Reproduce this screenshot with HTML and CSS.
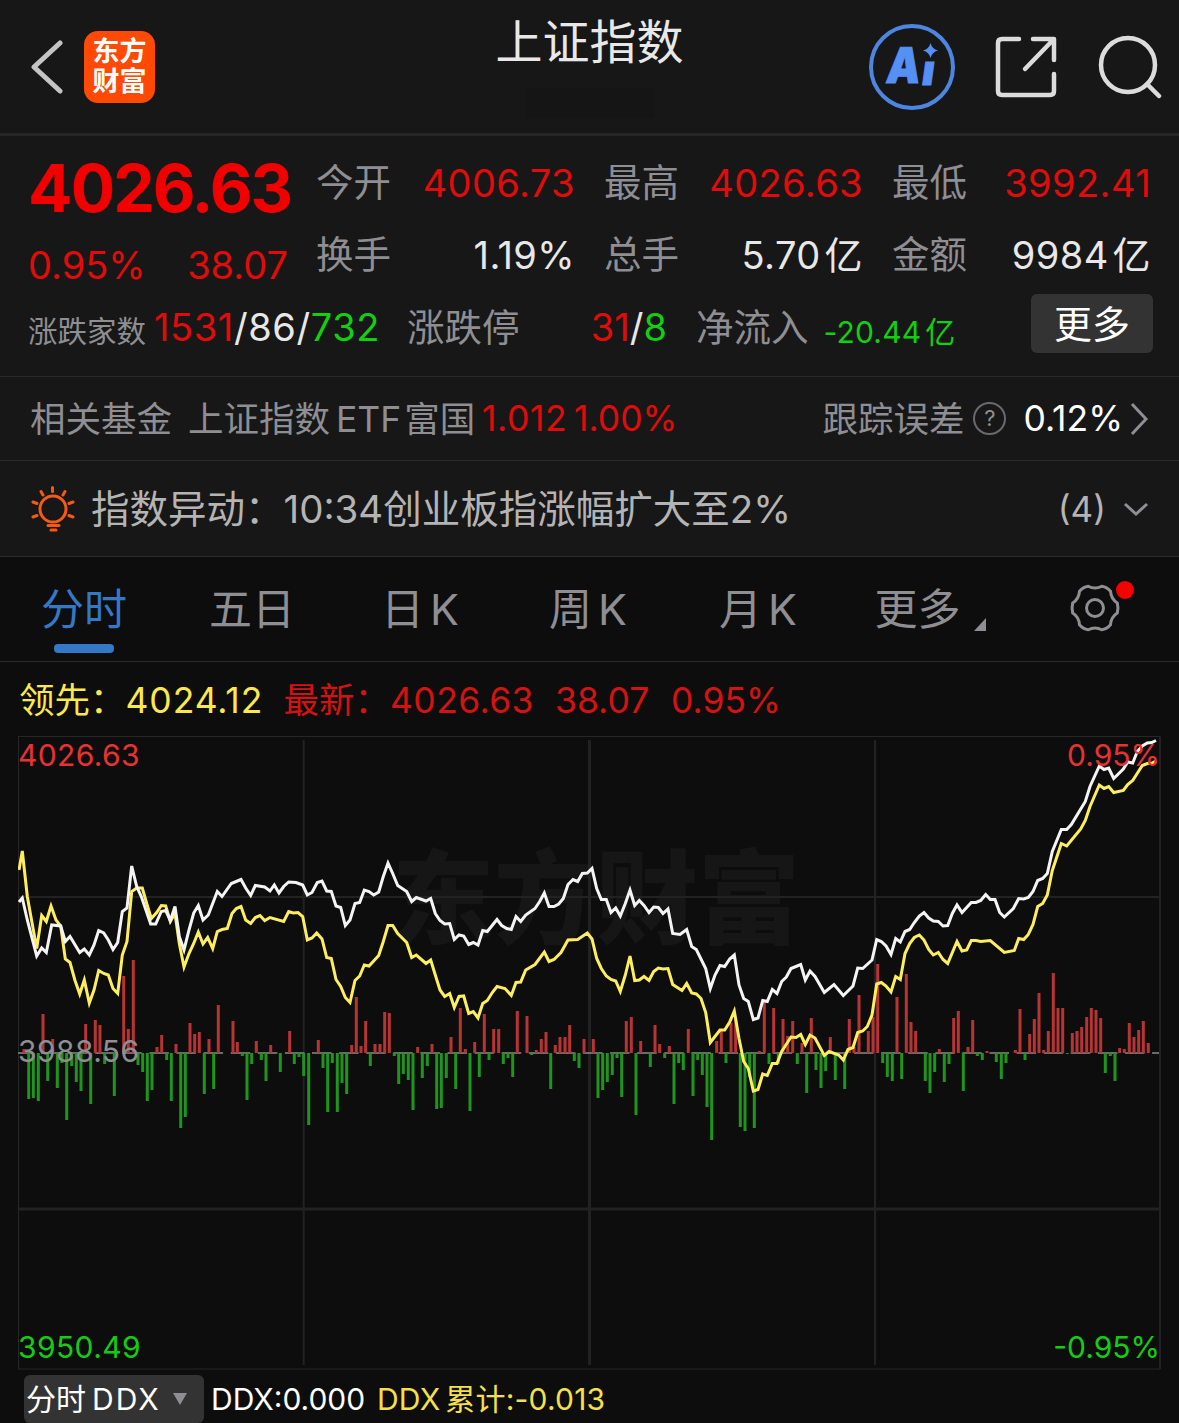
FILE: index.html
```
<!DOCTYPE html>
<html lang="zh-CN">
<head>
  <meta charset="UTF-8">
  <meta name="viewport" content="width=device-width, initial-scale=1.0">
  <title>上证指数</title>
  <link rel="stylesheet" href="styles.css">
</head>
<body>
  <header class="topbar">
    <div class="topbar-left">
      <svg class="back" width="34" height="56" viewBox="0 0 34 56"><path d="M31 4 L5 28 L31 52"/></svg>
      <div class="logo"><span>东方</span><span>财富</span></div>
    </div>
    <div class="title">
      <h1>上证指数</h1>
      <div class="subtitle"></div>
    </div>
    <div class="topbar-right">
      <svg class="ai" width="88" height="88" viewBox="0 0 88 88">
        <circle cx="44" cy="44" r="41"/>
        <text class="ai-a" x="0" y="0" transform="translate(17 60) skewX(-7) scale(0.87 1)">A</text>
        <text class="ai-i" x="0" y="0" transform="translate(52.5 62) skewX(-8)">ı</text>
        <path d="M62.500 20 Q64 26 70 27.500 Q64 29 62.500 35 Q61 29 55 27.500 Q61 26 62.500 20Z"/>
      </svg>
      <svg class="line-icon share" width="62" height="62" viewBox="0 0 62 62">
        <path d="M24 3 H7 Q3 3 3 7 V55 Q3 59 7 59 H55 Q59 59 59 55 V38"/>
        <path d="M38 3 H59 V24 M58 4 L30 33"/>
      </svg>
      <svg class="line-icon" width="64" height="64" viewBox="0 0 64 64">
        <circle cx="30" cy="30" r="27"/><path d="M49 49 L61 61"/>
      </svg>
    </div>
  </header>

  <section class="quote">
    <div class="quote-main">
      <div class="price">
        <div class="price-now">4026.63</div>
        <div class="price-change"><span>0.95%</span><span>38.07</span></div>
      </div>
      <div class="stats">
        <div class="stat"><label>今开</label><span class="red">4006.73</span></div>
        <div class="stat"><label>最高</label><span class="red">4026.63</span></div>
        <div class="stat"><label>最低</label><span class="red">3992.41</span></div>
        <div class="stat"><label>换手</label><span>1.19%</span></div>
        <div class="stat"><label>总手</label><span>5.70<i>亿</i></span></div>
        <div class="stat"><label>金额</label><span>9984<i>亿</i></span></div>
      </div>
    </div>
    <div class="quote-more">
      <label class="small">涨跌家数</label>
      <span class="count"><b class="red">1531</b>/86/<b class="green">732</b></span>
      <label class="limit-label">涨跌停</label>
      <span class="limit"><b class="red">31</b>/<b class="green">8</b></span>
      <label class="flow-label">净流入</label>
      <span class="flow green">-20.44<i>亿</i></span>
      <button class="more-btn">更多</button>
    </div>
  </section>

  <section class="fund">
    <span class="fund-label">相关基金</span>
    <span class="fund-name">上证指数<i>ETF</i>富国</span>
    <span class="fund-price red">1.012</span>
    <span class="fund-rate red">1.00%</span>
    <span class="track">跟踪误差</span>
    <span class="help">?</span>
    <span class="track-value">0.12%</span>
    <svg class="arrow-right" width="20" height="36" viewBox="0 0 20 36"><path d="M3 3 L17 18 L3 33"/></svg>
  </section>

  <section class="alert">
    <svg class="bulb" width="46" height="46" viewBox="0 0 46 46">
      <circle cx="23" cy="23" r="13"/>
      <path d="M22.500 1.500 V5.500 M11 5.500 L13 9 M35 5.500 L33 9 M3 16 L7 17.500 M43 16 L39 17.500 M3 31 L7 29.500 M43 31 L39 29.500 M18 39.500 H29 M21 44 H26"/>
    </svg>
    <span class="alert-text">指数异动：<i>10:34创业板指涨幅扩大至2%</i></span>
    <span class="alert-count">(4)</span>
    <svg class="arrow-down" width="26" height="16" viewBox="0 0 26 16"><path d="M2 3 L13 13 L24 3"/></svg>
  </section>

  <nav class="tabs">
    <a class="tab active">分时</a>
    <a class="tab">五日</a>
    <a class="tab">日<i>K</i></a>
    <a class="tab">周<i>K</i></a>
    <a class="tab">月<i>K</i></a>
    <a class="tab tab-more">更多<span class="corner"></span></a>
    <a class="settings">
      <svg width="52" height="52" viewBox="-26 -26 52 52">
        <path d="M22.300 -5 Q23.600 0 22.300 5 Q16 9 15.500 16.800 Q12 21 6.800 21.800 Q0 18 -6.800 21.800 Q-12 21 -15.500 16.800 Q-16 9 -22.300 5 Q-23.600 0 -22.300 -5 Q-16 -9 -15.500 -16.800 Q-12 -21 -6.800 -21.800 Q0 -18 6.800 -21.800 Q12 -21 15.500 -16.800 Q16 -9 22.300 -5Z"/>
        <circle r="8.500"/>
      </svg>
      <span class="dot"></span>
    </a>
  </nav>

  <section class="legend">
    <span class="lead">领先：</span><span class="lead lead-value">4024.12</span>
    <span class="last">最新：</span><span class="last last-value">4026.63</span><span class="last last-diff">38.07</span><span class="last">0.95%</span>
  </section>

  <section class="chart">
    <svg width="1143" height="634" viewBox="0 0 1143 634">
      <text class="watermark" x="374" y="200">东方财富</text>

      <!-- grid -->
      <rect class="frame" x="0.500" y="0.500" width="1141.500" height="632.500"/>
      <path class="grid" d="M285.700 4 V629 M857 4 V629 M1 161 H1142 M1142 1 V633"/>
      <path class="grid bold" d="M571.500 4 V629 M1 473 H1142"/>
      <path class="zero" d="M-4.100 317 H1141"/>

      <!-- net inflow / outflow bars -->
      <path class="bars up" d="M6 317v-4M25 317v-39M34.700 317v-14M67.700 317v-29M77.300 317v-33M82 317v-28M105.700 317v-77M110.300 317v-24M115.300 317v-93M139 317v-6M143.700 317v-18M158 317v-9M172 317v-30M176.700 317v-19M181.300 317v-21M191 317v-14M200.300 317v-48M215 317v-32M219.300 317v-11M238.300 317v-12M252.700 317v-8M271.700 317v-22M300.300 317v-13M333.700 317v-8M338.300 317v-56M343 317v-7M347.700 317v-32M357 317v-9M362 317v-9M366.700 317v-41M371.300 317v-40M399.700 317v-6M414 317v-9M433 317v-16M442.300 317v-45M447.300 317v-4M456.700 317v-11M466.300 317v-39M475.700 317v-24M480.700 317v-24M499.300 317v-42M509 317v-37M518.300 317v-3M523.300 317v-14M528 317v-21M537.300 317v-8M542 317v-16M547 317v-16M551.700 317v-28M566 317v-14M575.300 317v-14M608.300 317v-32M613.300 317v-36M622.700 317v-12M637 317v-28M641.700 317v-9M651.300 317v-7M670.300 317v-24M698.700 317v-12M703.300 317v-23M713 317v-30M717.700 317v-33M741.300 317v-2M746.300 317v-51M755.700 317v-45M765 317v-34M769.700 317v-17M774.700 317v-32M784 317v-10M793.300 317v-35M812.300 317v-16M831.300 317v-34M836 317v-6M841 317v-58M850.300 317v-22M855 317v-36M859.700 317v-89M879 317v-56M888.300 317v-79M893 317v-31M897.700 317v-22M921.300 317v-4M935.700 317v-35M940.300 317v-42M950 317v-6M954.700 317v-33M969 317v-2M997.300 317v-3M1002 317v-44M1011.700 317v-19M1016.300 317v-34M1021 317v-60M1025.700 317v-3M1030.300 317v-22M1035.300 317v-80M1040 317v-45M1044.700 317v-45M1054.300 317v-20M1059 317v-22M1063.700 317v-26M1068.700 317v-36M1073.300 317v-45M1078 317v-43M1082.700 317v-35M1101.700 317v-5M1106.300 317v-4M1111.300 317v-30M1116 317v-16M1120.700 317v-23M1125.300 317v-32M1130.300 317v-10"/>
      <path class="bars down" d="M10.700 317v46M15.300 317v45M20.300 317v48M29.700 317v28M39.300 317v35M44 317v10M48.700 317v67M53.700 317v13M58.300 317v29M63 317v38M72.700 317v51M86.700 317v11M96.300 317v43M120 317v12M124.700 317v19M129.300 317v48M134 317v37M148.700 317v7M153.300 317v48M162.700 317v75M167.300 317v64M186.300 317v41M195.700 317v36M224.300 317v3M229 317v47M233.700 317v11M243.300 317v7M248 317v28M262.300 317v19M276.300 317v11M281 317v4M285.700 317v23M290.700 317v72M305 317v15M309.700 317v59M314.300 317v10M319.300 317v59M324 317v30M328.700 317v41M352.300 317v13M376.300 317v3M380.700 317v31M385.300 317v21M390.300 317v27M395 317v57M404.300 317v25M409.300 317v13M418.700 317v56M423.300 317v55M428.300 317v25M437.700 317v36M452 317v58M461.300 317v24M471 317v7M485.300 317v11M490 317v5M494.700 317v24M513.700 317v2M532.700 317v36M556.300 317v8M561 317v15M580 317v45M584.700 317v37M589.300 317v29M594.300 317v22M599 317v5M603.700 317v44M618 317v62M632.300 317v14M646.700 317v5M656 317v51M660.700 317v10M665.300 317v17M675 317v43M679.700 317v7M684.300 317v22M689 317v54M693.700 317v87M708 317v10M722.300 317v74M727 317v78M731.700 317v24M736.300 317v75M751 317v11M760.300 317v11M779.300 317v11M788.700 317v40M798 317v17M803 317v35M807.700 317v18M817.300 317v27M826.700 317v36M864.700 317v10M869.300 317v24M874.300 317v28M883.700 317v26M907.300 317v28M912 317v40M916.700 317v19M926.300 317v29M931 317v11M945.300 317v38M959.300 317v3M964.300 317v7M978.300 317v9M983.300 317v26M988 317v10M1007 317v7M1049.300 317v1M1087.300 317v20M1092.300 317v3M1097 317v28"/>

      <polyline class="line yellow-line" points="1,134 4.3,115 9.3,160.5 18.7,212.5 23.7,179.5 28.3,185.5 33,170 38,184 42.7,190 47.3,223 52,226.5 57,244.5 61.7,258 66.3,244 71.3,267 76,254 80.7,234.5 85.7,237.5 90.3,239 95,252.5 99.7,257.5 104.3,219 109,205.5 113.7,155.5 118.7,152 124.3,152 128.7,167.5 133.3,182.5 138.7,176.5 143.3,169.5 147.7,170 152.3,185.5 157,177.5 161.3,207.5 166,231 171,217.5 175.7,207.5 180.3,196 185,208 189.7,201.5 194.7,212.5 199.3,195.5 204,193.5 209.3,192.5 214,177.5 218.3,172.5 223,170.5 227.7,184 232.7,187.5 237.3,181.5 242,179.5 246.7,184.5 252,181.5 265.7,185.5 270.7,175.5 275.3,177 280,176.5 284.7,180.5 289.3,204 294,202 298.7,197 304,203 308.7,221.5 313.3,222.5 318,243.5 322.7,250.5 327.3,261.5 332,266.5 337,244.5 341.7,240 346.3,229 351,230 360.7,219.5 365.3,205.5 370,189.5 374.7,189.5 379.7,197.5 388.7,206.5 393.7,221.5 398.3,219 408,227.5 412.7,224 417.3,239 422,254 426.7,260.5 431.7,257.5 436.3,271.5 441,260.5 445.7,260 450.7,277.5 455.3,275.5 460,282 464.7,267.5 469.3,264.5 474.3,256.5 479,250.5 487,252.5 493.3,259.5 498,246.5 502.7,246 507.7,234 517,228.5 526.3,216 531,225.5 536,223.5 543,216.5 550,204 559.7,203.5 569.3,197 574,203 578.7,222.5 583.3,232.5 588.3,240 593,243.5 597.7,245 602.3,255.5 607.3,239 612,220 616.7,244.5 621.3,244 626,240.5 631,244.5 635.7,235.5 640.3,232 645,233 650,232.5 654.7,248.5 664,254.5 668.7,247.5 673.7,257 678.3,258 683,262.5 687.7,276.5 692.3,306.5 702,294 706.7,294 711.7,286 716.3,275 721,302.5 725.7,325.5 730.3,332.5 735.3,355 740,353.5 744.7,338 749.3,339.5 754.3,327.5 759,327.5 763.7,315.5 773,301 778,301.5 782.7,298.5 787.3,308.5 792,299 797,302 806.3,319.5 811,315.5 820.7,319 825.3,324 830,313.5 835,311.5 839.7,296.5 844.7,295 849.3,290.5 854,279 858.7,248 863.3,246.5 868,250 873,256 877.7,240.5 882.3,243.5 887,217.5 891.7,207.5 896.3,201.5 901.3,199 906,204 910.7,213.5 915.3,219 920.3,216.5 925,223.5 929.7,227.5 939,205.5 944,215 948.7,214 953.3,204.5 958,204.5 962.7,205.5 972.3,204.5 986.3,216.5 996.3,214.5 1000.7,202.5 1005.7,203.5 1010.3,198.5 1015,188.5 1019.7,170.5 1024.7,167.5 1029.3,159 1034.3,134.5 1043.3,107.5 1048.7,110 1062.7,93 1067.3,84.5 1072,70.5 1081.3,49 1086,52.5 1090.7,50.5 1095.7,56.5 1105.3,54.5 1109.7,48.5 1114.7,44.5 1124.3,29.5 1129.3,27.5 1134,27 1138,25"/>
      <polyline class="line white-line" points="1,166 4.3,162 9.3,184 18.7,220 23.7,212 28.3,216.5 33.7,189 42.7,190 47.3,205.5 52,200.5 61.7,216.5 66.3,213 71.3,219 76,209 80.7,194.5 85.7,197 90.3,204 95,213.5 99.7,206.5 104.3,175.5 109,172 113.7,130 118.7,150.5 123.3,160.5 132.7,188 137.7,188 143.3,175.5 147.7,174.5 152.3,184.5 157,170.5 161.3,200.5 166,214 171,194 175.7,177 180.3,169.5 185,184 190.3,179 199.3,155.5 204,160.5 213.3,147.5 223,143.5 227.7,152 232.7,159.5 237.3,149.5 246.7,151 252,155 256.3,149 261,157 265.7,150.5 270.7,146 278,146.5 284.7,149 289.3,159 294,156.5 299.3,146.5 304,145 308.7,155 313.3,155.5 318,170 322.7,171.5 327.3,189.5 332,184 337,167.5 341.7,166.5 346.3,154 351,155.5 355.7,159 360.7,156 365.3,140.5 370,127 374.7,137.5 379.7,149.5 388.7,155.5 393.7,165.5 398.3,161.5 408,165 412.7,162.5 417.3,177.5 422,184.5 426.7,188 431.7,187.5 436.3,203.5 441,199 445.7,200 450.7,208.5 455.3,206.5 460,209 464.7,194.5 469.3,195.5 479,183.5 483.7,189.5 488.7,192.5 493.3,193.5 498,180.5 502.7,185.5 507.7,179 517,172.5 521.7,165.5 526.3,157 531,170.5 536,170.5 540.7,168 545.3,162.5 550,148.5 555,143.5 559.7,145.5 564.3,137.5 569.3,137 574,132.5 578.7,152.5 583.3,163.5 588.3,163.5 593,176.5 597.7,172 602.3,180 607.3,167.5 612,154 616.7,169.5 621.3,164.5 626,169.5 631,176.5 635.7,171 640.3,171.5 645,177.5 650,173 654.7,197.5 662,198.5 668.7,193.5 673.7,210.5 678.3,213.5 687.7,232.5 692.3,252.5 697,239 702,229.5 706.7,230.5 711.7,223 716.3,219 721,249 725.7,262.5 730.3,265.5 735.3,283.5 740,282 744.7,264.5 749.3,265.5 754.3,253.5 759,257.5 763.7,245.5 768.3,241 773,232.5 782.7,228.5 787.3,244 792,235 797,240.5 806.3,256.5 816,248.5 825.3,259.5 835,250 839.7,232 844.7,232.5 854,224 858.7,203.5 863.3,205.5 868,210 873,218.5 877.7,202.5 882.3,206 887,195.5 891.7,193.5 896.3,186.5 901.3,180 906,176.5 910.7,182 915.3,185 920.3,185.5 925,190 929.7,189.5 934.3,177.5 939,169 944,176.5 953.3,166.5 958,166.5 962.7,164.5 967.7,158.5 972.3,163.5 977,163.5 981.7,176.5 986.3,181 995.3,172.5 1000.7,162.5 1005.7,163 1010.3,161.5 1015,155.5 1019.7,144.5 1024.7,142.5 1029.3,137.5 1034.3,115.5 1043.3,93.5 1048.7,93.5 1053.3,88.5 1067.3,65.5 1072,50.5 1081.3,30 1086,33.5 1090.7,32 1095.7,42.5 1105.3,33 1109.7,26 1114.7,27 1119.3,15.5 1124.3,10 1129.3,7 1133.7,6.5 1138,4.5"/>

      <!-- axis labels -->
      <text class="axis axis-up" x="0" y="30">4026.63</text>
      <text class="axis axis-up end" x="1142" y="30">0.95%</text>
      <text class="axis axis-mid" x="0" y="326">3988.56</text>
      <text class="axis axis-down" x="0" y="622">3950.49</text>
      <text class="axis axis-down end" x="1142" y="622">-0.95%</text>
    </svg>
  </section>

  <footer class="indicator">
    <div class="select">分时<i>DDX</i><span class="caret"></span></div>
    <span class="ddx">DDX:0.000</span>
    <span class="ddx-sum"><i>DDX</i>累计:-0.013</span>
  </footer>
</body>
</html>
```

FILE: styles.css
```
* {
  box-sizing: border-box;
}
body {
  margin: 0;
  height: 1423px;
  overflow: hidden;
  background-color: #0d0d0d;
  color: #e8e8e8;
  font-family: Inter, "Noto Sans CJK SC", sans-serif;
  font-weight: 400;
  white-space: nowrap;
}
i, b {
  font-style: normal;
  font-weight: inherit;
}
svg {
  display: block;
  flex: none;
  fill: none;
}
.red {
  color: #e00b0b;
}
.green {
  color: #12cf12;
}

/* top bar */
.topbar {
  display: grid;
  grid-template-columns: 1fr 200px 1fr;
  height: 136px;
  background-color: #171717;
  border-bottom: 3px solid #262626;
}
.topbar-left {
  display: flex;
  align-items: center;
  padding-left: 29px;
  gap: 21px;
}
.back {
  stroke: #c4c4c4;
  stroke-width: 5;
  stroke-linecap: round;
  stroke-linejoin: round;
}
.logo {
  display: flex;
  flex-direction: column;
  align-items: center;
  justify-content: center;
  width: 71px;
  height: 72px;
  padding-top: 1px;
  border-radius: 14px;
  background-color: #ff4a05;
  color: #fff;
  font-size: 27px;
  font-weight: 700;
  line-height: 30px;
}
.title {
  display: flex;
  flex-direction: column;
  align-items: center;
}
.title h1 {
  margin: 15px 0 0;
  font-size: 47px;
  font-weight: 400;
  line-height: 54px;
}
.subtitle {
  width: 128px;
  height: 30px;
  margin-top: 19px;
  background-color: #151515;
}
.topbar-right {
  display: flex;
  align-items: center;
  justify-content: flex-end;
  padding-right: 17px;
}
.ai {
  margin-right: 39px;
}
.ai circle {
  stroke: #4d86e0;
  stroke-width: 4;
}
.ai text {
  fill: #5590f5;
  stroke: #5590f5;
  stroke-width: 1;
  font-weight: 900;
}
.ai-a {
  font-size: 49px;
}
.ai-i {
  font-size: 42px;
}
.ai path {
  fill: #5590f5;
}
.line-icon {
  stroke: #dcdcdc;
  stroke-width: 4.5;
  stroke-linecap: round;
  stroke-linejoin: round;
}
.share {
  margin-right: 41px;
}

/* quote */
.quote {
  height: 241px;
  padding: 11px 28px 0;
  background-color: #171717;
  border-bottom: 1px solid #2a2a2a;
}
.quote-main {
  display: flex;
  height: 144px;
}
label {
  color: #8e8e93;
  font-size: 37.5px;
  letter-spacing: 0;
}
.price {
  width: 288px;
  color: #e00b0b;
}
.price-now {
  color: #f20000;
  font-size: 66px;
  font-weight: 700;
  line-height: 82px;
  letter-spacing: -2px;
}
.price-change {
  display: flex;
  justify-content: space-between;
  width: 260px;
  font-size: 38px;
  line-height: 72px;
}
.stats {
  display: grid;
  grid-template-columns: 259px 259px 259px;
  align-content: start;
  column-gap: 29px;
}
.stat {
  display: flex;
  justify-content: space-between;
  height: 72px;
  line-height: 72px;
  font-size: 38px;
  letter-spacing: 0.4px;
}
.stat i, .flow i {
  margin-left: 4px;
}
.quote-more {
  display: flex;
  align-items: center;
  height: 72px;
  font-size: 38px;
}
.quote-more label {
  padding-bottom: 6px;
}
.quote-more .small {
  width: 126px;
  padding: 4px 0 0;
  font-size: 29.5px;
}
.count {
  width: 253px;
  letter-spacing: 0.6px;
}
.limit-label {
  width: 150px;
}
.limit {
  width: 110px;
  text-align: right;
}
.flow-label {
  margin-left: 29px;
}
.flow {
  padding-top: 6px;
  margin-left: 15px;
  font-size: 30px;
  letter-spacing: 0.2px;
}
.more-btn {
  width: 122px;
  height: 59px;
  margin: 0 -2px 7px auto;
  padding: 0 0 5px;
  border: none;
  border-radius: 6px;
  background-color: #333;
  color: #fff;
  font: inherit;
}

/* related fund */
.fund {
  display: flex;
  align-items: center;
  height: 84px;
  padding: 0 30px;
  background-color: #171717;
  border-bottom: 1px solid #2a2a2a;
  color: #8e8e93;
  font-size: 35.5px;
}
.fund-label, .fund-name, .track {
  padding-bottom: 5px;
}
.fund-label {
  width: 158px;
}
.fund-name {
  width: 294px;
}
.fund-name i {
  margin: 0 3px 0 6px;
}
.fund-price {
  width: 92px;
  letter-spacing: 0.6px;
}
.track {
  margin-left: auto;
}
.help {
  width: 33px;
  height: 33px;
  margin: 0 17px 0 9px;
  border: 2px solid #6a6a6e;
  border-radius: 50%;
  font-size: 22px;
  line-height: 29px;
  text-align: center;
}
.track-value {
  color: #fff;
}
.arrow-right {
  margin-left: 6px;
  stroke: #8e8e93;
  stroke-width: 3;
}

/* abnormal move */
.alert {
  display: flex;
  align-items: center;
  height: 96px;
  padding: 0 30px;
  background-color: #171717;
  border-bottom: 1px solid #2a2a2a;
  color: #b4b4b4;
  font-size: 38.5px;
}
.bulb {
  margin-right: 15px;
  stroke: #f55a14;
  stroke-width: 3;
  stroke-linecap: round;
}
.alert-text {
  padding-bottom: 6px;
}
.alert-count {
  margin-left: auto;
  margin-right: 17px;
  font-size: 35px;
}
.arrow-down {
  stroke: #8e8e93;
  stroke-width: 3;
}

/* period tabs */
.tabs {
  display: grid;
  grid-template-columns: 168px 168px 168px 168px 172px 172px 157px;
  height: 105px;
  border-bottom: 1px solid #2a2a2a;
  color: #8e8e93;
  font-size: 43px;
}
.tab {
  display: flex;
  justify-content: center;
  position: relative;
  line-height: 104px;
}
.tab i {
  margin-left: 6px;
}
.active {
  color: #3478c8;
}
.active::after {
  content: "";
  position: absolute;
  bottom: 8px;
  width: 60px;
  height: 9px;
  border-radius: 4px;
  background-color: #3478c8;
}
.corner {
  align-self: flex-end;
  margin: 0 0 30px 13px;
  border-left: 12px solid transparent;
  border-bottom: 13px solid #8e8e93;
}
.settings {
  display: flex;
  align-items: center;
  justify-content: center;
  position: relative;
  padding-bottom: 2px;
  stroke: #8e8e93;
  stroke-width: 3;
}
.dot {
  position: absolute;
  top: 24px;
  left: 100px;
  width: 18px;
  height: 18px;
  border-radius: 50%;
  background-color: #f60000;
}

/* chart legend */
.legend {
  display: flex;
  height: 74px;
  padding-left: 19px;
  font-size: 35.5px;
  line-height: 77px;
}
.lead {
  color: #fbe84e;
}
.lead-value {
  width: 158px;
  letter-spacing: 0.9px;
}
.last {
  color: #d41212;
}
.last-value {
  width: 165px;
  letter-spacing: 0.4px;
}
.last-diff {
  width: 116px;
}

/* chart */
.chart {
  height: 639px;
  padding-left: 18px;
}
.watermark {
  fill: #161616;
  font-size: 102px;
  font-weight: 900;
}
.frame {
  stroke: #262626;
  stroke-width: 1;
}
.grid {
  stroke: #222;
  stroke-width: 2;
}
.grid.bold {
  stroke-width: 3;
}
.zero {
  stroke: #8a8a8a;
  stroke-width: 1.5;
  stroke-dasharray: 19.5 7.6;
}
.bars {
  stroke-width: 3;
}
.up {
  stroke: #b83434;
}
.down {
  stroke: #1f951f;
}
.line {
  stroke-width: 3;
}
.yellow-line {
  stroke: #fdee60;
}
.white-line {
  stroke: #f4f4f4;
}
.axis {
  font-size: 30px;
  letter-spacing: 0.4px;
}
.axis-up {
  fill: #e83232;
}
.axis-mid {
  fill: #8e8e93;
}
.axis-down {
  fill: #14cc14;
}
.end {
  text-anchor: end;
  letter-spacing: 0;
}

/* indicator bar */
.indicator {
  display: flex;
  height: 48px;
  padding-left: 24px;
  font-size: 30px;
  line-height: 49px;
}
.select {
  display: flex;
  align-items: center;
  width: 180px;
  padding-left: 2px;
  border-radius: 6px;
  background-color: #333;
  color: #fff;
}
.select i {
  margin-left: 6px;
  letter-spacing: 2px;
}
.caret {
  margin-left: 12px;
  border: 7px solid transparent;
  border-top: 12px solid #8e8e93;
  border-bottom: none;
}
.ddx {
  width: 166px;
  margin-left: 7px;
  color: #fff;
}
.ddx-sum {
  color: #f5e04a;
  letter-spacing: 0.2px;
}
.ddx-sum i {
  margin-right: 5px;
}
```
